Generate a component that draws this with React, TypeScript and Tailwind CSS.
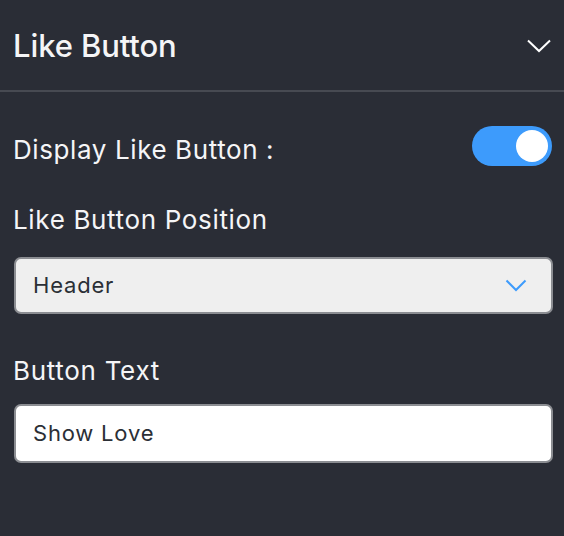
import React from "react";

export default function App() {
  return (
    <div className="w-[564px] h-[536px] bg-[#2a2d36] text-[#f5f5f7] overflow-hidden" style={{ fontFamily: "Inter, 'Noto Sans', sans-serif" }}>
      <div className="h-[90px] flex items-center justify-between pl-[13px] pr-[12px]">
        <h2 className="text-[31px] font-medium leading-none tracking-[-0.1px]">Like Button</h2>
        <svg width="26" height="16" viewBox="0 0 26 16" fill="none" className="mt-[1px]">
          <path d="M2 2.5 L13 13 L24 2.5" stroke="#ffffff" strokeWidth="2" />
        </svg>
      </div>
      <div className="h-[2px] bg-[#474a52]" />
      <div className="px-[14px] pr-[11px] flex flex-col">
        <div className="mt-[34px] h-[40px] flex items-center justify-between">
          <span className="text-[26px] leading-[32px] mt-[8px] -ml-[1px] tracking-[0.6px]">Display Like Button :</span>
          <div className="w-[80px] h-[40px] mr-[1px] rounded-full bg-[#3d9bfc] flex items-center justify-end pr-[4px]">
            <div className="w-[32px] h-[32px] rounded-full bg-white" />
          </div>
        </div>
        <div className="mt-[38px] text-[26px] leading-[32px] -ml-[1px] tracking-[0.65px]">Like Button Position</div>
        <div className="mt-[21px] h-[57px] rounded-[7px] border-2 border-[#8b8d92] bg-[#efefef] flex items-center justify-between pl-[17px] pr-[24px]">
          <span className="text-[22px] text-[#2b2f36] tracking-[0.8px]">Header</span>
          <svg width="22" height="13" viewBox="0 0 22 13" fill="none">
            <path d="M1.5 1.5 L11 11 L20.5 1.5" stroke="#3d9bfc" strokeWidth="2" />
          </svg>
        </div>
        <div className="mt-[41px] text-[26px] leading-[32px] -ml-[1px] tracking-[0.7px]">Button Text</div>
        <div className="mt-[17px] h-[59px] rounded-[7px] border-2 border-[#8b8d92] bg-white flex items-center pl-[17px]">
          <span className="text-[22px] text-[#2b2f36] tracking-[0.8px]">Show Love</span>
        </div>
      </div>
    </div>
  );
}
